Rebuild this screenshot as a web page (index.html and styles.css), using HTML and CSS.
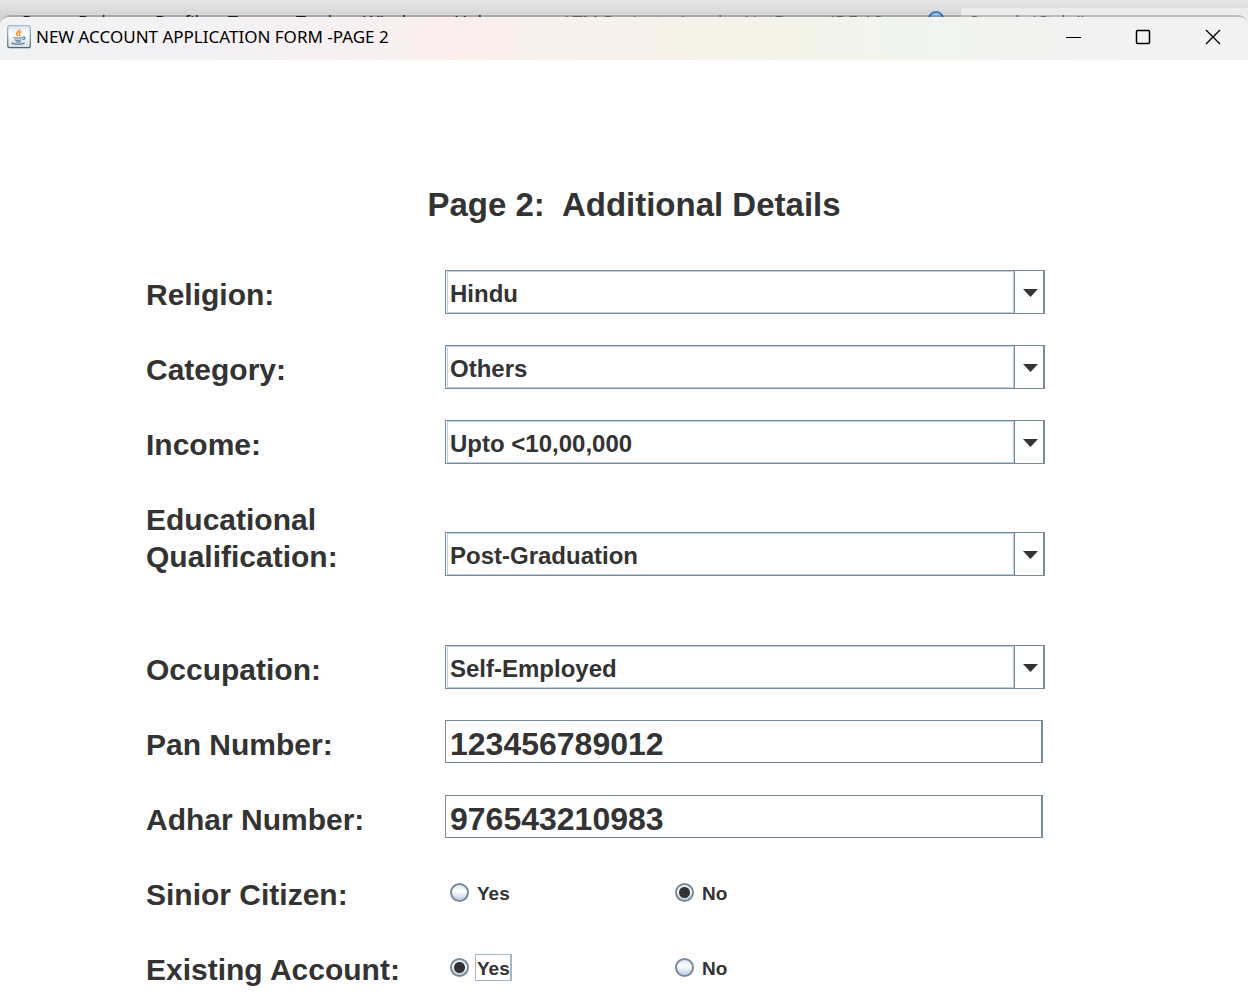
FILE: index.html
```html
<!DOCTYPE html>
<html lang="en">
<head>
<meta charset="utf-8">
<title>New Account Application Form - Page 2</title>
<link rel="stylesheet" href="styles.css">
</head>
<body>
<div class="ide" aria-hidden="true">
  <span class="menu-item run">Run</span>
  <span class="menu-item debug">Debug</span>
  <span class="menu-item profile">Profile</span>
  <span class="menu-item team">Team</span>
  <span class="menu-item tools">Tools</span>
  <span class="menu-item windows">Window</span>
  <span class="menu-item help">Help</span>
  <span class="project">ATM Project - Apache NetBeans IDE 18</span>
  <svg class="lens" viewBox="0 0 18 18"><circle cx="9" cy="9" r="7" fill="#a9c6e8" stroke="#3b7cc4" stroke-width="2"/></svg>
  <span class="search">Search (Ctrl+I)</span>
</div>
<main class="window">
  <header class="titlebar">
    <svg class="java" viewBox="0 0 24 24">
      <defs><linearGradient id="tile" x1="0" y1="0" x2="0" y2="1"><stop offset="0" stop-color="#dce6ee"/><stop offset=".4" stop-color="#fff"/><stop offset="1" stop-color="#d5dce2"/></linearGradient>
      <linearGradient id="edge" x1="0" y1="0" x2="0" y2="1"><stop offset="0" stop-color="#a6bccb"/><stop offset="1" stop-color="#4c6478"/></linearGradient></defs>
      <rect x=".7" y=".7" width="22.6" height="22" rx="2" fill="url(#tile)" stroke="url(#edge)" stroke-width="1.2"/>
      <path d="M12.500 4c1 2-3.500 3-3 5 .2 1 1.500 1.500 1.500 2.500M14.500 6.500c-2 1-3 2-2 3.200.7.8.3 1.300-.2 1.800" fill="none" stroke="#f08a2c" stroke-width="1.400"/>
      <path d="M6.500 12.500c2 .7 7 .7 9.500 0M16 12.200c3-.6 2.500 2.300-.5 2.500M7.500 14.700c2 .7 5 .7 7 0M8.500 16.700c1.500.5 4 .5 5.500 0M6 17.500c-4 1.800 9 2.300 11.500.2" fill="none" stroke="#557d9c" stroke-width="1.200"/>
    </svg>
    <h1 class="caption">NEW ACCOUNT APPLICATION FORM -PAGE 2</h1>
    <div class="controls">
      <button type="button" aria-label="Minimize"><svg viewBox="0 0 16 16"><path d="M1 8.500h15"/></svg></button>
      <button type="button" aria-label="Maximize"><svg viewBox="0 0 16 16"><rect x="1.500" y="1.500" width="13" height="13" rx="1" stroke-width="1.500"/></svg></button>
      <button type="button" aria-label="Close"><svg viewBox="0 0 16 16"><path d="M1 1l14 14M15 1L1 15" stroke-width="1.400"/></svg></button>
    </div>
  </header>
  <form class="form">
    <h2 class="heading">Page 2:&nbsp; Additional Details</h2>
    <div class="row">
      <label for="religion">Religion:</label>
      <div class="combo"><select id="religion"><option>Hindu</option></select></div>
    </div>
    <div class="row">
      <label for="category">Category:</label>
      <div class="combo"><select id="category"><option>Others</option></select></div>
    </div>
    <div class="row">
      <label for="income">Income:</label>
      <div class="combo"><select id="income"><option>Upto &lt;10,00,000</option></select></div>
    </div>
    <div class="row education">
      <label for="education">Educational<br>Qualification:</label>
      <div class="combo"><select id="education"><option>Post-Graduation</option></select></div>
    </div>
    <div class="row">
      <label for="occupation">Occupation:</label>
      <div class="combo"><select id="occupation"><option>Self-Employed</option></select></div>
    </div>
    <div class="row">
      <label for="pan">Pan Number:</label>
      <input class="field" id="pan" type="text" value="123456789012">
    </div>
    <div class="row">
      <label for="adhar">Adhar Number:</label>
      <input class="field" id="adhar" type="text" value="976543210983">
    </div>
    <div class="row" role="radiogroup" aria-labelledby="senior">
      <span class="label" id="senior">Sinior Citizen:</span>
      <div class="choices">
        <label class="choice"><input type="radio" name="senior"><span>Yes</span></label>
        <label class="choice"><input type="radio" name="senior" checked><span>No</span></label>
      </div>
    </div>
    <div class="row" role="radiogroup" aria-labelledby="existing">
      <span class="label" id="existing">Existing Account:</span>
      <div class="choices">
        <label class="choice current"><input type="radio" name="existing" checked><span>Yes</span></label>
        <label class="choice"><input type="radio" name="existing"><span>No</span></label>
      </div>
    </div>
  </form>
</main>
</body>
</html>
```
FILE: styles.css
```css
* { box-sizing: border-box; }
body {
  margin: 0;
  background: #fff;
  color: #333;
  font-family: "Liberation Sans", Arial, sans-serif;
}
.ide {
  position: relative;
  height: 24px;
  overflow: hidden;
  background: linear-gradient(#e6e6e6, #d4d4d4 16px);
  color: #222;
  font: 18px/24px "Open Sans", sans-serif;
}
.ide > * { position: absolute; top: 10px; white-space: nowrap; }
.run { left: 22px; }
.debug { left: 78px; }
.profile { left: 155px; }
.team { left: 228px; }
.tools { left: 296px; }
.windows { left: 363px; }
.help { left: 454px; }
.project { left: 561px; color: #777; }
.ide .lens { left: 927px; top: 10px; width: 18px; height: 18px; }
.ide .search {
  left: 961px;
  right: 0;
  top: 8px;
  height: 28px;
  padding-left: 8px;
  background: #ececec;
  color: #777;
  line-height: 28px;
}
.window {
  position: relative;
  margin-top: -9px;
  border-top: 2px solid rgba(0, 0, 0, .2);
  border-radius: 10px 10px 0 0;
  overflow: hidden;
  background: #fff;
  background-clip: padding-box;
}
.titlebar {
  display: flex;
  align-items: center;
  height: 43px;
  padding: 0 0 3px 7px;
  background: linear-gradient(90deg, #f1f2f3 0, #f3f1f4 18%, #faefee 36%, #f6f1ea 50%, #f4f3e9 62%, #f1f4ee 72%, #f2f2f2 90%);
}
.java { width: 24px; height: 24px; margin-right: 5px; }
.caption {
  margin: 0;
  color: #000;
  font: 17px/24px "Noto Sans", sans-serif;
}
.controls { display: flex; margin-left: auto; }
.controls button {
  display: grid;
  place-items: center;
  width: 70px;
  height: 40px;
  padding: 0;
  border: 0;
  background: none;
}
.controls svg { width: 16px; height: 16px; fill: none; stroke: #000; }
.form { padding: 120px 203px 8px 146px; }
.heading {
  margin: 0 0 40px;
  padding-left: 77px;
  font-size: 33px;
  line-height: 50px;
  text-align: center;
}
.row {
  display: grid;
  grid-template-columns: 299px 1fr;
  align-items: start;
  min-height: 44px;
  margin-bottom: 31px;
}
.row > label, .label {
  padding-top: 6px;
  font-size: 30px;
  font-weight: bold;
  line-height: 37px;
}
.combo {
  position: relative;
  height: 44px;
  padding-left: 1px;
  border: 1px solid #7a8a99;
  border-right-width: 2px;
}
.combo select {
  appearance: none;
  display: block;
  width: 100%;
  height: 42px;
  padding: 4px 32px 0 2px;
  border: 1px solid #b8cfe5;
  border-right: 0;
  border-radius: 0;
  background: #fff;
  color: #333;
  font: bold 24px/28px "Liberation Sans", Arial, sans-serif;
}
.combo::before {
  content: "";
  position: absolute;
  z-index: 1;
  top: 18px;
  right: 5px;
  width: 15px;
  height: 8px;
  background: #333;
  clip-path: polygon(0 0, 100% 0, 50% 100%);
  pointer-events: none;
}
.combo::after {
  content: "";
  position: absolute;
  top: 0;
  right: 0;
  width: 28px;
  height: 42px;
  border-left: 1px solid #7a8a99;
  background: #fff;
  box-shadow: -1px 0 #b8cfe5;
  pointer-events: none;
}
.education { min-height: 119px; }
.education .combo { margin-top: 37px; }
.field {
  width: calc(100% - 2px);
  height: 43px;
  padding: 6px 4px 0;
  border: 1px solid #7a8a99;
  border-right-width: 2px;
  border-radius: 0;
  background: #fff;
  color: #333;
  font: bold 32px/36px "Liberation Sans", Arial, sans-serif;
}
.choices { display: grid; grid-template-columns: 225px 1fr; padding: 9px 0 0 5px; }
.choice {
  display: flex;
  align-items: center;
  gap: 6px;
  font-size: 19px;
  font-weight: bold;
  line-height: 24px;
}
.choice input {
  appearance: none;
  width: 19px;
  height: 19px;
  margin: 0;
  border: 2px solid #7a8a99;
  border-radius: 50%;
  background: linear-gradient(#dce8f3, #fff 40%, #b8cfe5);
}
.choice input:checked {
  background: radial-gradient(circle, #333 5px, transparent 6px), linear-gradient(#dce8f3, #fff 40%, #b8cfe5);
}
.choice span { padding: 2px 0 0 1px; border: 1px solid transparent; line-height: 23px; }
.current span { border-color: #a3b8cc; border-right-width: 2px; }
```
